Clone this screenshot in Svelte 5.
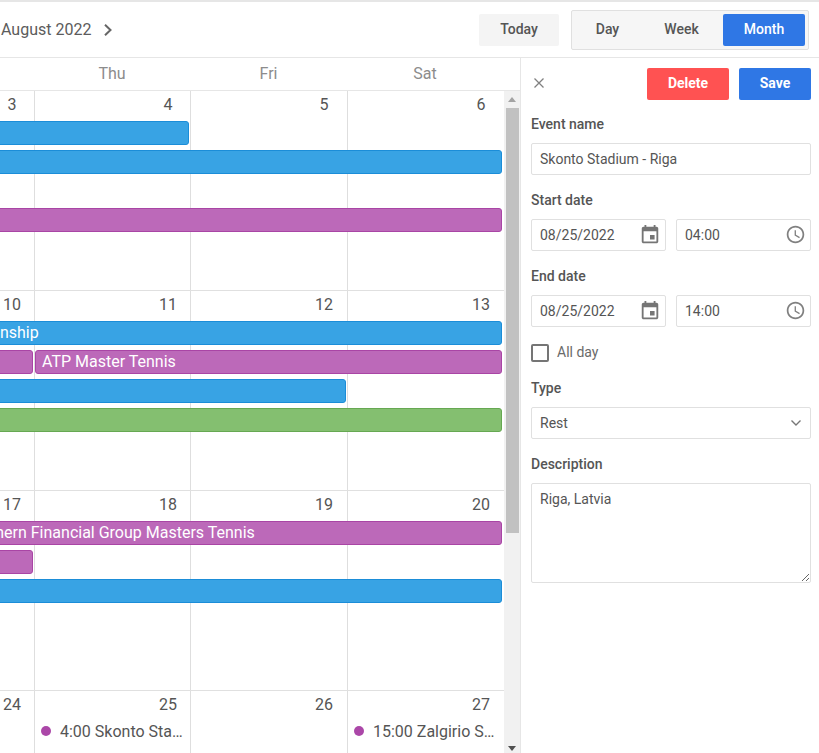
<script>
  const weeks = [
    {
      days: [3, 4, 5, 6],
      events: [
        { row: 1, from: 1, to: 3, color: 'blue' },
        { row: 2, from: 1, to: 5, color: 'blue' },
        { row: 4, from: 1, to: 5, color: 'purple' }
      ]
    },
    {
      days: [10, 11, 12, 13],
      events: [
        { row: 1, from: 1, to: 5, color: 'blue', label: 'Championship', clip: 'clip-a' },
        { row: 2, from: 1, to: 2, color: 'purple' },
        { row: 2, from: 2, to: 5, color: 'purple', label: 'ATP Master Tennis' },
        { row: 3, from: 1, to: 4, color: 'blue' },
        { row: 4, from: 1, to: 5, color: 'green' }
      ]
    },
    {
      days: [17, 18, 19, 20],
      events: [
        { row: 1, from: 1, to: 5, color: 'purple', label: 'Western & Southern Financial Group Masters Tennis', clip: 'clip-b' },
        { row: 2, from: 1, to: 2, color: 'purple' },
        { row: 3, from: 1, to: 5, color: 'blue' }
      ]
    },
    {
      days: [24, 25, 26, 27],
      events: [],
      dots: [
        { col: 2, label: '4:00 Skonto Stadium - Riga' },
        { col: 4, label: '15:00 Zalgirio Stadium - Vilnius' }
      ]
    }
  ];
</script>

<div class="scheduler">
  <header class="toolbar">
    <div class="nav">
      <span class="period">August 2022</span>
      <svg class="next" width="10" height="12" viewBox="0 0 10 12"><path d="M2 .8l5.5 5.2-5.5 5.2" /></svg>
    </div>
    <div class="actions">
      <button class="today">Today</button>
      <div class="views">
        <button class="view">Day</button>
        <button class="view">Week</button>
        <button class="view active">Month</button>
      </div>
    </div>
  </header>

  <div class="main">
    <section class="calendar">
      <div class="weekdays">
        <div></div>
        <div>Thu</div>
        <div>Fri</div>
        <div>Sat</div>
      </div>
      <div class="scroller">
        <div class="weeks">
          {#each weeks as week}
            <div class="week">
              {#each week.days as day, i}
                <div class="cell" style="grid-column: {i + 1}">
                  <span class="num">{day}</span>
                </div>
              {/each}
              {#each week.events as ev}
                <div
                  class="event {ev.color}"
                  class:continued={ev.from === 1}
                  style="grid-row: {ev.row + 1}; grid-column: {ev.from} / {ev.to}"
                >
                  {#if ev.label}
                    <span class="label {ev.clip || ''}">{ev.label}</span>
                  {/if}
                </div>
              {/each}
              {#each week.dots || [] as d}
                <div class="dot-event" style="grid-column: {d.col}">
                  <i class="dot"></i>
                  <span class="dot-text">{d.label}</span>
                </div>
              {/each}
            </div>
          {/each}
        </div>
        <div class="scrollbar">
          <svg class="arrow" width="8" height="5" viewBox="0 0 8 5"><path d="M4 0l4 5H0z" /></svg>
          <div class="thumb"></div>
          <div class="rest"></div>
          <svg class="arrow dark" width="8" height="5" viewBox="0 0 8 5"><path d="M0 0h8L4 5z" /></svg>
        </div>
      </div>
    </section>

    <aside class="editor">
      <div class="editor-head">
        <svg class="close" width="12" height="12" viewBox="0 0 12 12"><path d="M1.5 1.5l9 9M10.5 1.5l-9 9" /></svg>
        <button class="btn delete">Delete</button>
        <button class="btn save">Save</button>
      </div>

      <div class="field first">
        <label for="name">Event name</label>
        <input id="name" type="text" value="Skonto Stadium - Riga" />
      </div>

      <div class="field">
        <label for="start">Start date</label>
        <div class="pair">
          <div class="with-icon">
            <input id="start" type="text" value="08/25/2022" />
            <svg class="icon" width="22" height="22" viewBox="0 0 24 24"><path d="M17 12h-5v5h5v-5zM16 1v2H8V1H6v2H5c-1.11 0-1.99.9-1.99 2L3 19c0 1.1.89 2 2 2h14c1.1 0 2-.9 2-2V5c0-1.1-.9-2-2-2h-1V1h-2zm3 18H5V8h14v11z" /></svg>
          </div>
          <div class="with-icon">
            <input type="text" value="04:00" />
            <svg class="icon clock" width="21" height="21" viewBox="0 0 24 24"><path d="M11.99 2C6.47 2 2 6.48 2 12s4.47 10 9.99 10C17.52 22 22 17.52 22 12S17.52 2 11.99 2zM12 20c-4.42 0-8-3.58-8-8s3.58-8 8-8 8 3.58 8 8-3.58 8-8 8zm.5-13H11v6l5.25 3.15.75-1.23-4.5-2.67z" /></svg>
          </div>
        </div>
      </div>

      <div class="field">
        <label for="end">End date</label>
        <div class="pair">
          <div class="with-icon">
            <input id="end" type="text" value="08/25/2022" />
            <svg class="icon" width="22" height="22" viewBox="0 0 24 24"><path d="M17 12h-5v5h5v-5zM16 1v2H8V1H6v2H5c-1.11 0-1.99.9-1.99 2L3 19c0 1.1.89 2 2 2h14c1.1 0 2-.9 2-2V5c0-1.1-.9-2-2-2h-1V1h-2zm3 18H5V8h14v11z" /></svg>
          </div>
          <div class="with-icon">
            <input type="text" value="14:00" />
            <svg class="icon clock" width="21" height="21" viewBox="0 0 24 24"><path d="M11.99 2C6.47 2 2 6.48 2 12s4.47 10 9.99 10C17.52 22 22 17.52 22 12S17.52 2 11.99 2zM12 20c-4.42 0-8-3.58-8-8s3.58-8 8-8 8 3.58 8 8-3.58 8-8 8zm.5-13H11v6l5.25 3.15.75-1.23-4.5-2.67z" /></svg>
          </div>
        </div>
      </div>

      <label class="check">
        <input type="checkbox" />
        <span>All day</span>
      </label>

      <div class="field after-check">
        <label for="type">Type</label>
        <div class="with-icon">
          <select id="type"><option>Rest</option></select>
          <svg class="chevron" width="12" height="8" viewBox="0 0 12 8"><path d="M1.5 1.5L6 6l4.5-4.5" /></svg>
        </div>
      </div>

      <div class="field">
        <label for="desc">Description</label>
        <textarea id="desc">Riga, Latvia</textarea>
      </div>
    </aside>
  </div>
</div>

<style>
  :global(body) {
    margin: 0;
    overflow: hidden;
  }

  .scheduler {
    width: 819px;
    height: 753px;
    box-sizing: border-box;
    border-top: 2px solid #e6e6e6;
    display: flex;
    flex-direction: column;
    overflow: hidden;
    background: #fff;
    color: #555;
    font-family: Roboto, sans-serif;
    font-size: 14px;
  }

  button {
    font-family: inherit;
    border: 0;
    padding: 0 0 2px;
    cursor: pointer;
  }

  /* toolbar */
  .toolbar {
    flex: none;
    height: 56px;
    box-sizing: border-box;
    border-bottom: 1px solid #e6e6e6;
    display: flex;
    align-items: center;
    justify-content: space-between;
    padding: 1px 10px 0 1px;
  }

  .nav {
    display: flex;
    align-items: center;
  }

  .period {
    font-size: 16px;
    color: #5c5c5c;
    margin-bottom: 2px;
  }

  .next {
    margin-left: 12px;
    fill: none;
    stroke: #666;
    stroke-width: 2;
  }

  .actions {
    display: flex;
    align-items: center;
    gap: 12px;
  }

  .today {
    width: 80px;
    height: 32px;
    border-radius: 2px;
    background: #f4f4f4;
    color: #555;
    font-size: 14px;
    font-weight: 500;
  }

  .views {
    display: grid;
    grid-template-columns: 65px 83px 82px;
    box-sizing: border-box;
    width: 238px;
    height: 40px;
    padding: 3px;
    border: 1px solid #e0e0e0;
    border-radius: 2px;
    background: #f6f6f6;
  }

  .view {
    height: 32px;
    border-radius: 2px;
    background: transparent;
    color: #555;
    font-size: 14px;
    font-weight: 500;
  }

  .view.active {
    background: #2f77e5;
    color: #fff;
  }

  /* calendar */
  .main {
    flex: 1;
    display: flex;
    min-height: 0;
  }

  .calendar {
    flex: none;
    width: 520px;
    display: flex;
    flex-direction: column;
    min-height: 0;
  }

  .weekdays {
    flex: none;
    height: 33px;
    box-sizing: border-box;
    border-bottom: 1px solid #e6e6e6;
    padding-bottom: 2px;
    display: grid;
    grid-template-columns: 34px 156px 157px 156px 17px;
    align-items: center;
    text-align: center;
    font-size: 16px;
    color: #8c8c8c;
  }

  .scroller {
    flex: 1;
    display: flex;
    min-height: 0;
  }

  .weeks {
    flex: none;
    width: 504px;
    overflow: hidden;
  }

  .week {
    height: 200px;
    box-sizing: border-box;
    border-bottom: 1px solid #e0e0e0;
    display: grid;
    grid-template-columns: 35px 156px 157px 156px;
    grid-template-rows: 30px repeat(4, 29px) 1fr;
  }

  .week:last-child {
    height: 62px;
    border-bottom: 0;
    grid-template-rows: 30px 1fr;
  }

  .cell {
    grid-row: 1 / -1;
    box-sizing: border-box;
    border-right: 1px solid #dedede;
    display: flex;
    justify-content: flex-end;
    align-items: flex-start;
    padding: 4px 7px 0 0;
    font-size: 16px;
    line-height: 20px;
    color: #555;
  }

  .cell:nth-child(3) {
    padding-right: 8px;
  }

  .cell:nth-child(4) {
    border-right: 0;
    padding-right: 8px;
  }

  .num {
    flex: none;
    width: 30px;
    text-align: center;
  }

  .event {
    height: 24px;
    box-sizing: border-box;
    margin-right: 2px;
    border: 1px solid;
    border-radius: 3px;
    color: #fff;
    font-size: 16px;
    line-height: 22px;
    white-space: nowrap;
    overflow: hidden;
  }

  /* bars that began in a column left of the visible area */
  .event.continued {
    margin-left: -4px;
  }

  .event.blue {
    background: #38a3e4;
    border-color: #1b8dd8;
  }

  .event.purple {
    background: #bc69b9;
    border-color: #a945a5;
  }

  .event.green {
    background: #84bf70;
    border-color: #66a852;
  }

  .label {
    display: inline-block;
    margin-left: 6px;
  }

  .clip-a {
    margin-left: -61px;
  }

  .clip-b {
    margin-left: -111px;
  }

  .dot-event {
    grid-row: 2;
    display: flex;
    align-items: center;
    height: 24px;
    margin-top: -2px;
    padding-left: 6px;
    min-width: 0;
    font-size: 16px;
    color: #555;
  }

  .dot {
    flex: none;
    width: 10px;
    height: 10px;
    border-radius: 50%;
    background: #ab47a8;
    margin-right: 9px;
  }

  .dot-text {
    width: 125px;
    white-space: nowrap;
    overflow: hidden;
    text-overflow: ellipsis;
  }

  /* scrollbar */
  .scrollbar {
    flex: none;
    width: 16px;
    display: flex;
    flex-direction: column;
    align-items: center;
    background: #f1f1f1;
    position: relative;
  }

  .arrow {
    flex: none;
    fill: #a3a3a3;
    margin: 6px 0;
  }

  .arrow.dark {
    fill: #505050;
    margin: 0 0 2px;
  }

  .thumb {
    flex: none;
    width: 13px;
    height: 425px;
    background: #c1c1c1;
    margin-left: 1px;
  }

  .rest {
    flex: 1;
  }

  /* editor */
  .editor {
    flex: 1;
    box-sizing: border-box;
    border-left: 1px solid #e6e6e6;
    padding: 10px 8px 0 10px;
    min-width: 0;
  }

  .editor-head {
    display: flex;
    align-items: center;
    gap: 10px;
  }

  .close {
    margin: 0 auto 2px 2px;
    fill: none;
    stroke: #808080;
    stroke-width: 1.3;
  }

  .btn {
    height: 32px;
    border-radius: 2px;
    color: #fff;
    font-size: 14px;
    font-weight: 700;
  }

  .delete {
    width: 82px;
    background: #ff5252;
  }

  .save {
    width: 72px;
    background: #2f77e5;
  }

  .field {
    margin-top: 15px;
  }

  .field.first {
    margin-top: 14px;
  }

  .field.after-check {
    margin-top: 16px;
  }

  .field > label {
    display: block;
    font-size: 14px;
    font-weight: 500;
    line-height: 21px;
    margin-bottom: 8px;
    color: #555;
  }

  input[type='text'],
  select,
  textarea {
    display: block;
    width: 100%;
    box-sizing: border-box;
    height: 32px;
    margin: 0;
    padding: 0 8px;
    border: 1px solid #e0e0e0;
    border-radius: 2px;
    background: #fff;
    color: #555;
    font-family: inherit;
    font-size: 14px;
    outline: none;
  }

  select {
    appearance: none;
  }

  textarea {
    height: 100px;
    padding: 6px 8px;
    line-height: 18px;
  }

  .pair {
    display: grid;
    grid-template-columns: 1fr 1fr;
    gap: 10px;
  }

  .with-icon {
    position: relative;
  }

  .icon {
    position: absolute;
    right: 5px;
    top: 5px;
    fill: #757575;
  }

  .icon.clock {
    fill: #808080;
  }

  .chevron {
    position: absolute;
    right: 9px;
    top: 12px;
    fill: none;
    stroke: #777;
    stroke-width: 1.4;
  }

  .check {
    display: flex;
    align-items: center;
    gap: 8px;
    height: 18px;
    margin-top: 17px;
    font-size: 14px;
    color: #6a6a6a;
  }

  .check span {
    margin-bottom: 2px;
  }

  .check input {
    appearance: none;
    flex: none;
    width: 18px;
    height: 18px;
    box-sizing: border-box;
    margin: 0;
    border: 2px solid #757575;
    border-radius: 2px;
    background: #fff;
  }
</style>
